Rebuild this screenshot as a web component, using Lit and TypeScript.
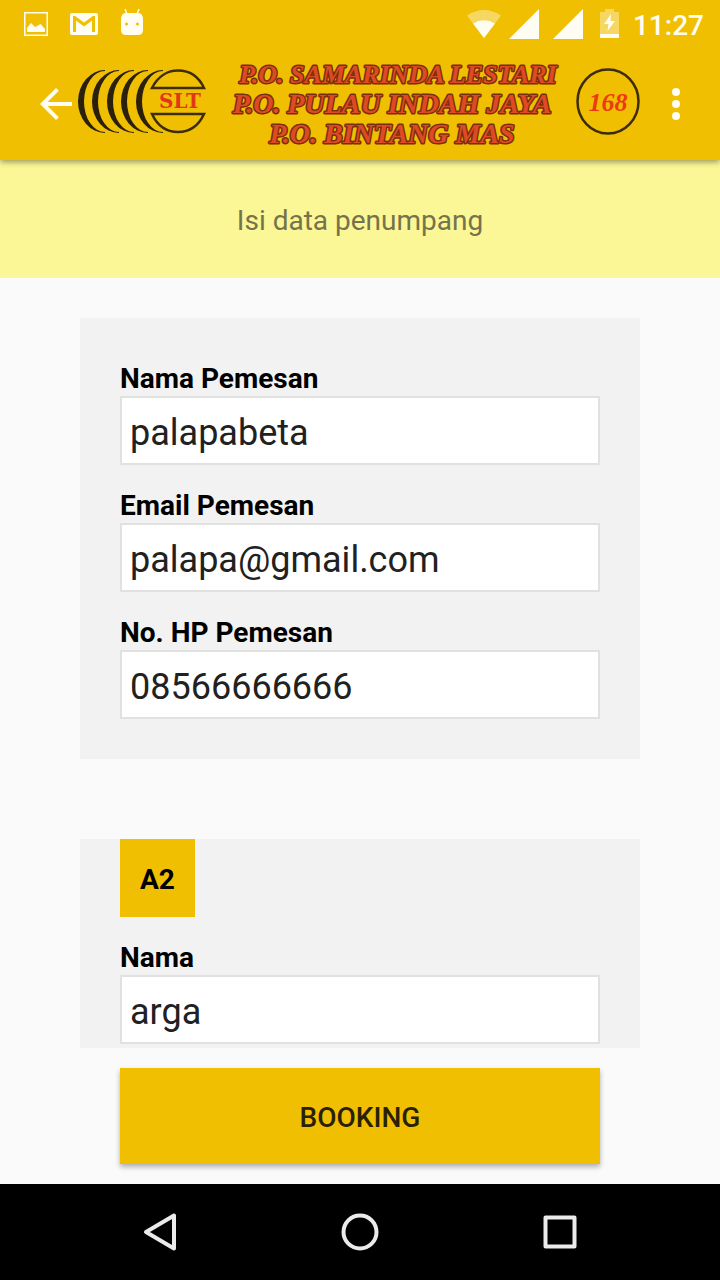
import { LitElement, html, svg, css } from "lit";
import { customElement, property } from "lit/decorators.js";

@customElement("status-bar")
class StatusBar extends LitElement {
  static styles = css`
    :host {
      display: flex;
      align-items: center;
      justify-content: space-between;
      height: 48px;
      padding: 0 16px 0 24px;
      color: #fffdf2;
    }
    .group { display: flex; align-items: center; }
    .notices { gap: 22px; }
    .system { gap: 8px; }
    .time { padding-top: 4px; font-size: 28px; line-height: 44px; font-weight: 500; }
    svg { display: block; fill: currentColor; }
  `;

  render() {
    const signal = html`<svg width="36" height="30" viewBox="0 0 36 30"><path d="M0 30 30 0V30Z" /></svg>`;
    return html`
      <div class="group notices">
        <svg width="24" height="30" viewBox="0 0 24 30">
          <path fill-rule="evenodd" d="M0 3H24V27H0ZM1.500 4.500V25.500H22.500V4.500Z" />
          <path d="M3 23V19L7 14 11 18 14 16.500 16.500 15 21 20V23Z" />
        </svg>
        <svg width="28" height="30" viewBox="0 0 28 30">
          <path fill-rule="evenodd" d="M2 4H26Q28 4 28 6V24Q28 26 26 26H2Q0 26 0 24V6Q0 4 2 4ZM3 7V23H6V11.500L14 17.500 22 11.500V23H25V7H23L14 13.500 5 7Z" />
        </svg>
        <svg width="24" height="30" viewBox="0 0 24 30">
          <path d="M5 0 7 5M19 0 17 5" stroke="currentColor" stroke-width="1.500" />
          <path fill-rule="evenodd" d="M5 4H19Q23 5 23 10V21Q23 26 18 26H6Q1 26 1 21V10Q1 5 5 4ZM6.500 13.500A1.500 1.500 0 1 0 6.500 16.500 1.500 1.500 0 1 0 6.500 13.500ZM17.500 13.500A1.500 1.500 0 1 0 17.500 16.500 1.500 1.500 0 1 0 17.500 13.500Z" />
        </svg>
      </div>
      <div class="group system">
        <svg width="34" height="30" viewBox="0 0 34 30">
          <path opacity=".4" d="M0 6.500Q17-4.500 34 6.500L17 29Z" />
          <path d="M6 14.500Q17 8 28 14.500L17 29Z" />
        </svg>
        ${signal}${signal}
        <svg width="28" height="30" viewBox="-3 0 28 30">
          <path opacity=".4" d="M0 3H5V0H14V3H19V25H0Z" />
          <path d="M0 25H19V29H0ZM11 5 4 15H8.500L7.500 22 15 12H10.500Z" />
        </svg>
        <span class="time">11:27</span>
      </div>
    `;
  }
}

@customElement("app-toolbar")
class AppToolbar extends LitElement {
  static styles = css`
    :host {
      display: flex;
      align-items: center;
      height: 112px;
      padding: 0 32px 0 40px;
    }
    button {
      flex: none;
      border: 0;
      padding: 0;
      background: none;
      color: #fffdf2;
    }
    svg { display: block; }
    .icon { fill: currentColor; }
    .logo { flex: 0 1 564px; min-width: 0; margin-left: 6px; margin-right: auto; }
    .company {
      font: italic 700 28px "Liberation Serif", serif;
      fill: #df4a25;
      stroke: #7a2f0c;
      stroke-width: 3px;
      stroke-linejoin: round;
      paint-order: stroke;
      text-anchor: middle;
    }
    .long { font-size: 26px; }
    .initials { font: 700 20px "DejaVu Serif", serif; fill: #e2361a; text-anchor: middle; }
    .number { font: italic 700 26px "Liberation Serif", serif; fill: #ec3b12; text-anchor: middle; }
  `;

  render() {
    const rings = [0, 14, 29, 43, 58];
    return html`
      <button aria-label="Kembali">
        <svg class="icon" width="32" height="32" viewBox="4 4 16 16">
          <path d="M20 11H7.830l5.590-5.590L12 4l-8 8 8 8 1.410-1.410L7.830 13H20z" />
        </svg>
      </button>
      <svg class="logo" viewBox="0 -10 564 100">
        ${rings.map((x) => svg`<path fill="#2b200c" transform="translate(${x} 0)" d="M27 6A27 31.500 0 0 0 27 69V68A21 30.500 0 0 1 27 7Z" />`)}
        <path fill="none" stroke="#3c2c08" stroke-width="2.500" d="M74 24H126C120 11 110 6.500 100 6.500S80 12 74 24ZM74 50H126C120 63 110 68 100 68S80 63 74 50Z" />
        <text class="initials" x="102" y="44">SLT</text>
        <text class="company long" x="320" y="19">P.O. SAMARINDA LESTARI</text>
        <text class="company" x="314" y="49">P.O. PULAU INDAH JAYA</text>
        <text class="company" x="314" y="79">P.O. BINTANG MAS</text>
        <ellipse cx="530" cy="37.500" rx="30.500" ry="32" fill="none" stroke="#3c2c08" stroke-width="2.500" />
        <text class="number" x="530" y="47">168</text>
      </svg>
      <button aria-label="Menu">
        <svg class="icon" width="24" height="32" viewBox="0 0 24 32">
          <circle cx="12" cy="4" r="4" /><circle cx="12" cy="16" r="4" /><circle cx="12" cy="28" r="4" />
        </svg>
      </button>
    `;
  }
}

@customElement("form-field")
class FormField extends LitElement {
  @property() label = "";
  @property() value = "";
  @property() type = "text";

  static styles = css`
    :host { display: block; }
    label {
      display: block;
      padding-top: 4px;
      font-size: 28px;
      line-height: 34px;
      font-weight: 700;
      color: #000;
    }
    input {
      display: block;
      box-sizing: border-box;
      width: 100%;
      height: 69px;
      margin: 0;
      padding: 4px 8px 0;
      border: 2px solid #e1e1e1;
      border-radius: 0;
      background: #fff;
      color: #212121;
      font-family: inherit;
      font-size: 36px;
      outline: none;
    }
  `;

  render() {
    return html`
      <label for="field">${this.label}</label>
      <input id="field" type=${this.type} .value=${this.value} />
    `;
  }
}

@customElement("nav-bar")
class NavBar extends LitElement {
  static styles = css`
    :host {
      display: flex;
      align-items: center;
      justify-content: center;
      gap: 160px;
      height: 96px;
      background: #000;
    }
    button { border: 0; padding: 0; background: none; color: #ebebeb; }
    svg { display: block; fill: none; stroke: currentColor; stroke-width: 4; stroke-linejoin: round; }
  `;

  render() {
    return html`
      <button aria-label="Back"><svg width="40" height="40" viewBox="0 0 40 40"><path d="M34 3.500V36.500L6 20Z" /></svg></button>
      <button aria-label="Home"><svg width="40" height="40" viewBox="0 0 40 40"><circle cx="20" cy="20" r="16.500" /></svg></button>
      <button aria-label="Recent"><svg width="40" height="40" viewBox="0 0 40 40"><path d="M5.500 5.500H34.500V34.500H5.500Z" /></svg></button>
    `;
  }
}

@customElement("app-root")
class AppRoot extends LitElement {
  static styles = css`
    :host {
      display: flex;
      flex-direction: column;
      height: 100vh;
      background: #fafafa;
      font-family: Roboto, sans-serif;
    }
    .top {
      flex: none;
      position: relative;
      z-index: 1;
      background: #f1bf02;
      box-shadow: 0 2px 6px rgba(0, 0, 0, 0.4);
    }
    .hint {
      flex: none;
      margin: 0;
      padding: 42px 40px 38px;
      background: #fbf796;
      color: #75734b;
      font-size: 28px;
      line-height: 38px;
      font-weight: 400;
      text-align: center;
    }
    .content {
      flex: 1;
      min-height: 0;
      overflow-y: auto;
      scrollbar-width: none;
      display: flex;
      flex-direction: column;
      gap: 80px;
      padding: 40px 80px 0;
    }
    .card {
      flex: none;
      display: flex;
      flex-direction: column;
      gap: 20px;
      padding: 40px;
      background: #f2f2f2;
    }
    .passenger { padding-top: 0; }
    .seat {
      align-self: flex-start;
      padding: 22px 20px 18px;
      background: #f1bf02;
      color: #000;
      font-size: 28px;
      line-height: 38px;
      font-weight: 700;
    }
    .actions { flex: none; display: flex; padding: 20px 120px; }
    .booking {
      flex: 1;
      height: 96px;
      border: 0;
      padding: 2px 0 0;
      background: #f1bf02;
      box-shadow: 0 3px 5px rgba(0, 0, 0, 0.3);
      color: #2a2105;
      font-family: inherit;
      font-size: 28px;
      font-weight: 500;
    }
    nav-bar { flex: none; }
  `;

  render() {
    return html`
      <header class="top">
        <status-bar></status-bar>
        <app-toolbar></app-toolbar>
      </header>
      <h1 class="hint">Isi data penumpang</h1>
      <main class="content">
        <section class="card">
          <form-field label="Nama Pemesan" value="palapabeta"></form-field>
          <form-field label="Email Pemesan" type="email" value="palapa@gmail.com"></form-field>
          <form-field label="No. HP Pemesan" type="tel" value="08566666666"></form-field>
        </section>
        <section class="card passenger">
          <div class="seat">A2</div>
          <form-field label="Nama" value="arga"></form-field>
        </section>
      </main>
      <div class="actions"><button class="booking">BOOKING</button></div>
      <nav-bar></nav-bar>
    `;
  }
}
